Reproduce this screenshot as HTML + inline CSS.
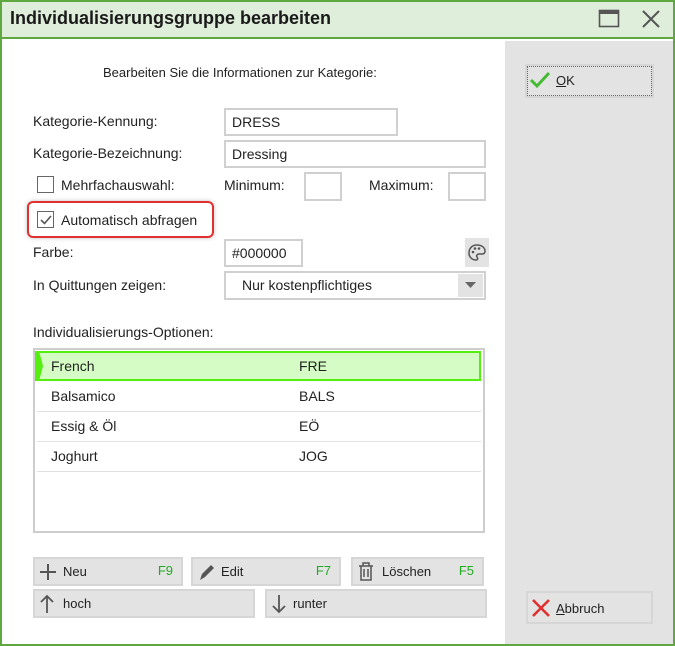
<!DOCTYPE html>
<html><head><meta charset="utf-8"><style>
*{box-sizing:border-box;margin:0;padding:0}
body{width:675px;height:646px;position:relative;background:#fff;font-family:"Liberation Sans",sans-serif;font-size:14px;color:#222;overflow:hidden}
.a{position:absolute;white-space:nowrap}
.in{position:absolute;border:2px solid #d0d0d0;background:#fff;padding-left:6px;line-height:24px}
.btn{position:absolute;background:#e3e3e3;border:2px solid #d6d6d6;line-height:23px;font-size:13px}
.f{position:absolute;color:#22aa22;right:8px;top:0}
.row{position:absolute;left:2px;right:2px;height:30px;border-bottom:1px solid #e2e2e2;line-height:29px}
</style></head><body>
<div class="a" style="left:0;top:0;width:675px;height:646px;border:2px solid #5fa841"></div>
<div class="a" style="left:2px;top:2px;width:671px;height:37px;background:#dfeedb;border-bottom:2px solid #5fa841"></div>
<div class="a" style="left:10px;top:8px;font-size:18px;font-weight:bold;color:#1a1a1a">Individualisierungsgruppe bearbeiten</div>
<svg class="a" style="left:598px;top:9px" width="24" height="20"><rect x="1.5" y="1.5" width="19" height="16" fill="none" stroke="#555" stroke-width="1.6"/><rect x="1" y="1" width="20" height="4" fill="#555"/></svg>
<svg class="a" style="left:641px;top:9px" width="20" height="20"><path d="M2 2L18 18M18 2L2 18" stroke="#555" stroke-width="2"/></svg>
<div class="a" style="left:505px;top:41px;width:168px;height:603px;background:#e3e3e3"></div>
<div class="a" style="left:0;top:644px;width:675px;height:2px;background:#5fa841"></div>

<div class="a" style="left:103px;top:65px;font-size:13px">Bearbeiten Sie die Informationen zur Kategorie:</div>
<div class="a" style="left:33px;top:113px">Kategorie-Kennung:</div>
<div class="in" style="left:224px;top:108px;width:174px;height:28px">DRESS</div>
<div class="a" style="left:33px;top:145px">Kategorie-Bezeichnung:</div>
<div class="in" style="left:224px;top:140px;width:262px;height:28px">Dressing</div>
<div class="a" style="left:37px;top:176px;width:17px;height:17px;border:1.5px solid #666;background:#fff"></div>
<div class="a" style="left:61px;top:177px">Mehrfachauswahl:</div>
<div class="a" style="left:224px;top:177px">Minimum:</div>
<div class="in" style="left:304px;top:172px;width:38px;height:29px"></div>
<div class="a" style="left:369px;top:177px">Maximum:</div>
<div class="in" style="left:448px;top:172px;width:38px;height:29px"></div>
<div class="a" style="left:27px;top:201px;width:187px;height:37px;border:2px solid #e03030;border-radius:6px;box-shadow:0 0 4px rgba(0,0,0,.25)"></div>
<div class="a" style="left:37px;top:211px;width:17px;height:17px;border:1.5px solid #666;background:#fff"></div>
<svg class="a" style="left:38px;top:212px" width="16" height="16"><path d="M3 8L6.5 11.5L13 4" fill="none" stroke="#555" stroke-width="1.6"/></svg>
<div class="a" style="left:61px;top:212px">Automatisch abfragen</div>
<div class="a" style="left:33px;top:244px">Farbe:</div>
<div class="in" style="left:224px;top:239px;width:79px;height:28px">#000000</div>
<div class="a" style="left:465px;top:238px;width:24px;height:29px;background:#e3e3e3"></div>
<svg class="a" style="left:466px;top:242px" width="22" height="22"><path d="M11 3C6 3 3 6.5 3 11c0 4 3 7 7 7 2 0 2-2 1-3s0-3 2-3h3c2 0 3-1 3-3 0-3.5-3.5-6-8-6z" fill="none" stroke="#555" stroke-width="1.5"/><circle cx="7" cy="10" r="1.3" fill="#555"/><circle cx="9" cy="6.5" r="1.3" fill="#555"/><circle cx="13" cy="6.5" r="1.3" fill="#555"/></svg>
<div class="a" style="left:33px;top:277px">In Quittungen zeigen:</div>
<div class="in" style="left:224px;top:271px;width:262px;height:29px;padding-left:16px">Nur kostenpflichtiges</div>
<div class="a" style="left:458px;top:274px;width:25px;height:23px;background:#e3e3e3"></div>
<svg class="a" style="left:465px;top:282px" width="12" height="8"><path d="M0 0H11L5.5 6z" fill="#666"/></svg>
<div class="a" style="left:33px;top:324px">Individualisierungs-Optionen:</div>
<div class="a" style="left:33px;top:348px;width:452px;height:185px;border:2px solid #cdcdcd">
 <div class="row" style="top:1px;height:30px;background:#d4fcc4;border:2px solid #55ee11"></div>
 <svg class="a" style="left:0;top:1px" width="10" height="30"><path d="M0 0H4L8 15L4 30H0z" fill="#55ee11"/></svg>
 <div class="a" style="left:16px;top:8px">French</div><div class="a" style="left:264px;top:8px">FRE</div>
 <div class="row" style="top:32px"></div>
 <div class="a" style="left:16px;top:38px">Balsamico</div><div class="a" style="left:264px;top:38px">BALS</div>
 <div class="row" style="top:62px"></div>
 <div class="a" style="left:16px;top:68px">Essig &amp; Öl</div><div class="a" style="left:264px;top:68px">EÖ</div>
 <div class="row" style="top:92px"></div>
 <div class="a" style="left:16px;top:98px">Joghurt</div><div class="a" style="left:264px;top:98px">JOG</div>
</div>

<div class="btn" style="left:33px;top:557px;width:150px;height:29px"><svg class="a" style="left:4px;top:4px" width="18" height="18"><path d="M9 1V17M1 9H17" stroke="#555" stroke-width="2"/></svg><span class="a" style="left:28px;top:1px">Neu</span><span class="f">F9</span></div>
<div class="btn" style="left:191px;top:557px;width:150px;height:29px"><svg class="a" style="left:4px;top:3px" width="20" height="20"><path d="M3 18L5 12L14 3L17 6L8 15z" fill="#555"/></svg><span class="a" style="left:28px;top:1px">Edit</span><span class="f">F7</span></div>
<div class="btn" style="left:351px;top:557px;width:133px;height:29px"><svg class="a" style="left:4px;top:2px" width="18" height="22"><path d="M2 5H16M6 5V2H12V5M4 5V19H14V5M7 8V16M11 8V16" fill="none" stroke="#555" stroke-width="1.5"/></svg><span class="a" style="left:29px;top:1px">Löschen</span><span class="f">F5</span></div>
<div class="btn" style="left:33px;top:589px;width:222px;height:29px"><svg class="a" style="left:4px;top:3px" width="16" height="20"><path d="M8 19V2M2 8L8 2L14 8" fill="none" stroke="#555" stroke-width="1.8"/></svg><span class="a" style="left:28px;top:1px">hoch</span></div>
<div class="btn" style="left:265px;top:589px;width:222px;height:29px"><svg class="a" style="left:4px;top:3px" width="16" height="20"><path d="M8 1V18M2 12L8 18L14 12" fill="none" stroke="#555" stroke-width="1.8"/></svg><span class="a" style="left:26px;top:1px">runter</span></div>

<div class="btn" style="left:527px;top:66px;width:125px;height:30px;border:1px dotted #666;outline:2px solid #d6d6d6"><svg class="a" style="left:1px;top:3px" width="22" height="20"><path d="M2 10L8 16L20 3" fill="none" stroke="#44bb33" stroke-width="3"/></svg><span class="a" style="left:28px;top:2px"><u>O</u>K</span></div>
<div class="btn" style="left:526px;top:591px;width:127px;height:33px"><svg class="a" style="left:3px;top:5px" width="20" height="20"><path d="M2 2L18 18M18 2L2 18" stroke="#e03030" stroke-width="2.6"/></svg><span class="a" style="left:28px;top:4px"><u>A</u>bbruch</span></div>
</body></html>
